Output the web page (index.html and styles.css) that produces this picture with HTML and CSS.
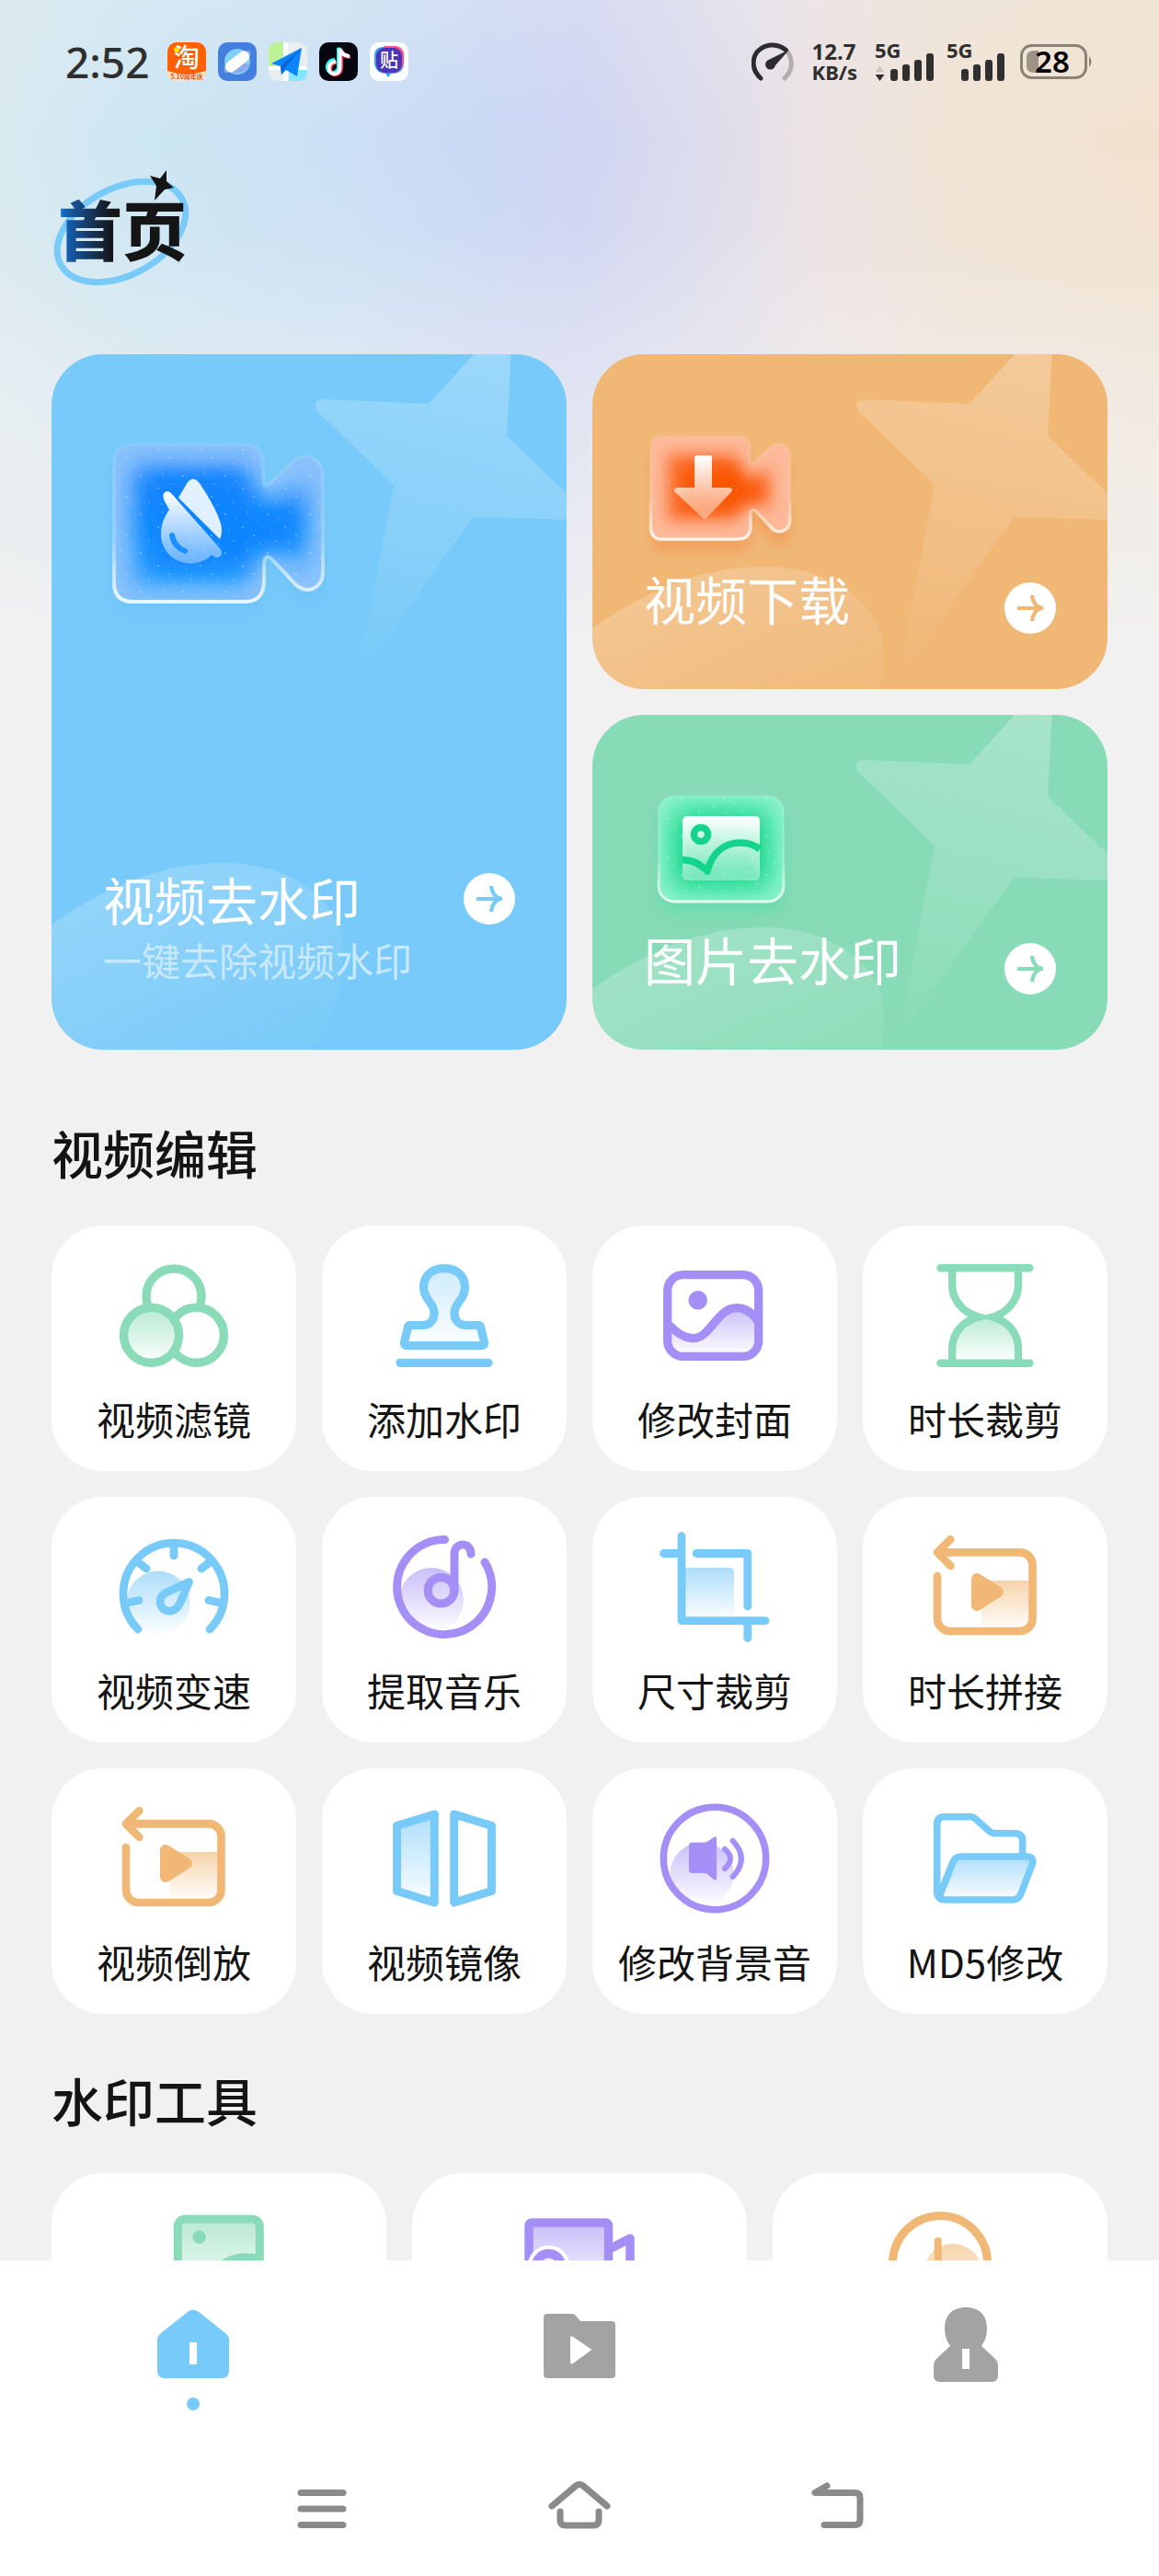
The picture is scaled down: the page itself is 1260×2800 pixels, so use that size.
FILE: index.html
```html
<!DOCTYPE html>
<html lang="zh-CN">
<head>
<meta charset="utf-8">
<meta name="viewport" content="width=device-width, initial-scale=1">
<title>首页</title>
<link rel="stylesheet" href="styles.css">
</head>
<body>
<svg class="defs" aria-hidden="true">
  <defs>
    <linearGradient id="fade-green" x1="0" y1="0" x2="0" y2="1"><stop offset="0" stop-color="#b9ead2"/><stop offset="1" stop-color="#fbfefd"/></linearGradient>
    <linearGradient id="fade-blue" x1="0" y1="0" x2="0" y2="1"><stop offset="0" stop-color="#aedefb"/><stop offset="1" stop-color="#fbfdff"/></linearGradient>
    <linearGradient id="fade-purple" x1="0" y1="0" x2="0" y2="1"><stop offset="0" stop-color="#c9bff9"/><stop offset="1" stop-color="#fefdff"/></linearGradient>
    <linearGradient id="fade-orange" x1="0" y1="0" x2="0" y2="1"><stop offset="0" stop-color="#f6d4ab"/><stop offset="1" stop-color="#fffcf9"/></linearGradient>
    <linearGradient id="star-fade" x1=".6" y1="0" x2=".4" y2="1"><stop offset="0" stop-color="#fff" stop-opacity=".27"/><stop offset="1" stop-color="#fff" stop-opacity=".03"/></linearGradient>
    <linearGradient id="hill-fade" x1="0" y1="0" x2=".7" y2="1"><stop offset="0" stop-color="#fff" stop-opacity=".24"/><stop offset="1" stop-color="#fff" stop-opacity=".03"/></linearGradient>
    <linearGradient id="rim" x1="0" y1="0" x2="0" y2="1"><stop offset="0" stop-color="#fff" stop-opacity=".08"/><stop offset=".6" stop-color="#fff" stop-opacity=".2"/><stop offset="1" stop-color="#fff" stop-opacity=".85"/></linearGradient>
    <linearGradient id="glyph-white" x1="0" y1="0" x2="0" y2="1"><stop offset="0" stop-color="#fff"/><stop offset="1" stop-color="#fff" stop-opacity=".35"/></linearGradient>
    <linearGradient id="deep-blue" x1="0" y1="0" x2="0" y2="1"><stop offset="0" stop-color="#1f7fff"/><stop offset=".5" stop-color="#0a88ff"/><stop offset="1" stop-color="#2ea4ff"/></linearGradient>
    <filter id="soft" x="-20%" y="-20%" width="140%" height="140%"><feGaussianBlur stdDeviation="13"/></filter>
    <filter id="shade" x="-30%" y="-30%" width="160%" height="180%"><feGaussianBlur stdDeviation="9"/></filter>
    <pattern id="specks" width="46" height="42" patternUnits="userSpaceOnUse">
      <g fill="#fff" opacity=".4"><circle cx="5" cy="6" r=".9"/><circle cx="17" cy="12" r=".7"/><circle cx="29" cy="4" r=".8"/><circle cx="40" cy="15" r=".7"/><circle cx="9" cy="23" r=".7"/><circle cx="24" cy="20" r=".9"/><circle cx="36" cy="29" r=".9"/><circle cx="14" cy="35" r=".8"/><circle cx="28" cy="37" r=".7"/><circle cx="43" cy="38" r=".7"/></g>
    </pattern>
    <path id="camera" d="M88 98H210Q230 98 230 118V140Q232 146 237 141L262 117C274 104 295 113 295 131V237C295 256 275 262 264 249L239 222Q231 216 231 228V248Q230 269 210 269H88Q68 269 68 248V118Q68 98 88 98Z"/>
    <clipPath id="camera-clip"><use href="#camera"/></clipPath>
    <clipPath id="tile-clip"><rect x="72" y="88" width="136" height="115" rx="17"/></clipPath>
    <path id="star" d="M296 49L410 54L468 -10H500L495 89L566 157V180L458 177L353 325Q347 333 340 330Q338 327 339 318L372 142L289 62Q282 50 296 49Z" fill="url(#star-fade)"/>
    <path id="hill" d="M0 67C60 25 120 0 187 0C265 0 317 45 317 94C317 140 305 175 282 205H0Z" fill="url(#hill-fade)"/>
    <symbol id="arrow" viewBox="0 0 56 56"><circle cx="28" cy="28" r="28" fill="#fff"/><path d="M14 28H42M30 14C31 23 36 28 42 28C36 28 31 33 30 42" fill="none" stroke="currentColor" stroke-width="4.200"/></symbol>
    <symbol id="loop-video" viewBox="0 0 140 140">
      <rect x="66" y="63" width="52" height="51" fill="url(#fade-orange)"/>
      <path d="M20 32.4H108A13.5 13.5 0 0 1 121.5 46V104.5A13.5 13.5 0 0 1 108 118H31.5A13.5 13.5 0 0 1 18 104.5V58M32.3 18.2L18 32.4L32.3 46.9" fill="none" stroke="#f0b775" stroke-width="8.6" stroke-linecap="round" stroke-linejoin="round"/>
      <path d="M61 61L84 75.3L61 90Z" fill="#f0b775" stroke="#f0b775" stroke-width="12" stroke-linejoin="round"/>
    </symbol>
    <symbol id="signal" viewBox="0 0 48 30"><g fill="#2f2f2f"><rect x="0" y="17" width="8" height="13" rx="3"/><rect x="13" y="12" width="8" height="18" rx="3"/><rect x="26" y="7" width="8" height="23" rx="3"/><rect x="39" y="0" width="8" height="30" rx="3"/></g></symbol>
  </defs>
</svg>

<div class="app">
  <header class="status">
    <div class="status-side">
      <time class="clock">2:52</time>
      <div class="notices">
        <svg class="notice" viewBox="0 0 42 42" aria-hidden="true">
          <rect width="42" height="42" rx="10" fill="#ff6000"/>
          <path d="M0 31Q20 38 42 31V32Q42 42 32 42H10Q0 42 0 32Z" fill="#ffe3c4"/>
          <circle cx="10" cy="8" r="3" fill="#ffe000"/>
          <text x="21" y="27" text-anchor="middle" font-size="28" font-weight="500" fill="#fff">淘</text>
          <text x="21" y="40" text-anchor="middle" font-size="7" font-weight="700" fill="#e0521c">5.10周年庆</text>
        </svg>
        <svg class="notice" viewBox="0 0 42 42" aria-hidden="true">
          <rect width="42" height="42" rx="10" fill="#427fde"/>
          <circle cx="21" cy="21" r="14" fill="#7fd0f5"/>
          <path d="M9 27A14 14 0 0 0 34 24L24 22Z" fill="#8fa8ee"/>
          <ellipse cx="21" cy="21" rx="18" ry="6.500" transform="rotate(-38 21 21)" fill="#a9cdf8" opacity=".55"/>
          <rect x="6" y="15" width="30" height="12" rx="6" transform="rotate(-38 21 21)" fill="#fff"/>
        </svg>
        <svg class="notice" viewBox="0 0 42 42" aria-hidden="true">
          <rect width="42" height="42" rx="10" fill="#e9eff0"/>
          <path d="M10 0H17V26H0V10Q0 0 10 0Z" fill="#bdf297"/>
          <path d="M22 30H42V32Q42 42 32 42H22Z" fill="#86e4fd"/>
          <path d="M16 0H21V42H16ZM0 26H42V30H0Z" fill="#fff"/>
          <path d="M36 6L3 23L13 26L14 35L19 30L31 37Z" fill="#0b84ff"/><path d="M36 6L13 26L14 35L18 28Z" fill="#0866d8"/>
        </svg>
        <svg class="notice" viewBox="0 0 42 42" aria-hidden="true">
          <rect width="42" height="42" rx="10" fill="#05060f"/>
          <g fill="none" stroke-width="4"><path d="M17 19C6 19 7 34 15 33Q21 32 21 26V6Q24 14 31 14" stroke="#25f4ee"/><path d="M19 22C10 22 10 36 18 35Q24 34 24 28V8Q26 16 34 16" stroke="#fe2c55"/><path d="M18 21C8 21 9 35 16.500 34.500Q22.500 33.500 22.500 27.500V7Q25 15 33 15" stroke="#fff"/></g>
        </svg>
        <svg class="notice" viewBox="0 0 42 42" aria-hidden="true">
          <rect width="42" height="42" rx="10" fill="#fff"/>
          <path d="M14 5H28Q37 5 37 15V23Q37 33 26 34H23L20 38L17 34Q5 33 5 21V15Q5 5 14 5Z" fill="#2ea4f7"/>
          <path d="M15 4H28Q37 5 37 15V23Q35 31 27 33Z" fill="#ff4f86"/>
          <rect x="7" y="6" width="28" height="27" rx="9" fill="#4b34b5"/>
          <text x="21" y="27" text-anchor="middle" font-size="20" font-weight="500" fill="#fff">贴</text>
        </svg>
      </div>
    </div>
    <div class="status-side status-right">
      <svg class="meter" viewBox="0 0 46 42" aria-hidden="true">
        <path d="M37 8C46 17 45 31 36 39" fill="none" stroke="#b3adac" stroke-width="5" stroke-linecap="round"/>
        <path d="M10 39C-1 29 0 14 10 7C18 1 29 2 37 8" fill="none" stroke="#2c2c2e" stroke-width="5" stroke-linecap="round"/>
        <path d="M41 8L26 25A5.500 5.500 0 1 1 18.500 19Z" fill="#2c2c2e"/>
      </svg>
      <div class="rate"><span class="rate-num">12.7</span><span>KB/s</span></div>
      <div class="cell">
        <span>5G</span>
        <div class="cell-bars">
          <svg class="traffic" viewBox="0 0 11 18" aria-hidden="true"><path d="M0 7L5.500 0L11 7Z" fill="#cac3bd"/><path d="M0 10H11L5.500 18Z" fill="#2f2f2f"/></svg>
          <svg class="bars" aria-hidden="true"><use href="#signal"/></svg>
        </div>
      </div>
      <div class="cell">
        <span>5G</span>
        <div class="cell-bars"><svg class="bars" aria-hidden="true"><use href="#signal"/></svg></div>
      </div>
      <svg class="battery" viewBox="0 0 80 38" role="img" aria-label="28">
        <rect x="1.500" y="1.500" width="70" height="35" rx="11" fill="none" stroke="#8a8177" stroke-width="3"/>
        <path d="M20 7V31H15Q7 31 7 24V14Q7 7 15 7Z" fill="#9d9286"/>
        <path d="M75 13Q80 19 75 25Z" fill="#8a8177"/>
        <text x="35" y="31" text-anchor="middle" font-size="33" font-weight="600" fill="#000">28</text>
      </svg>
    </div>
  </header>

  <main class="content">
    <h1 class="logo">
      <svg class="logo-art" viewBox="0 0 156 134" role="img" aria-label="首页">
        <defs><linearGradient id="ink" gradientUnits="userSpaceOnUse" x1="8" y1="0" x2="72" y2="0"><stop offset="0" stop-color="#1279da"/><stop offset=".25" stop-color="#155298"/><stop offset=".9" stop-color="#151515"/></linearGradient></defs>
        <ellipse cx="76" cy="72" rx="75" ry="47" transform="rotate(-28.500 76 72)" fill="none" stroke="#78caf9" stroke-width="7"/>
        <text x="7" y="98" font-size="70" font-weight="900" fill="url(#ink)">首页</text>
        <path d="M107 11L118 14L125 5V17L133 24L123 26L112 38L114 22Z" fill="#151515"/>
      </svg>
    </h1>

    <section class="hero">
      <a class="feature feature-tall feature-blue" href="#">
        <svg class="feature-art" viewBox="0 0 560 756" aria-hidden="true">
          <use href="#star"/><use href="#hill" y="553"/>
          <use href="#camera" y="14" fill="#4aa0f0" opacity=".15" filter="url(#shade)"/>
          <g clip-path="url(#camera-clip)">
            <use href="#camera" fill="#8ac2fc"/>
            <path d="M90 122H214V162L242 162L276 142V232L242 208L214 212V252H90Z" fill="url(#deep-blue)" filter="url(#soft)"/>
            <path d="M110 140H220V175H262V208H220V232H110Z" fill="#0a85ff" filter="url(#soft)"/>
            <use href="#camera" fill="url(#specks)"/>
          </g>
          <use href="#camera" fill="none" stroke="url(#rim)" stroke-width="4"/>
          <path d="M148 139Q154 132 160 139C172 156 185 180 185 191Q185 197 183 201L138 156Z" fill="#fff" opacity=".88"/>
          <path d="M130 151L183 211Q187 216 183 220Q179 223 174 218C163 230 141 231 128 218C115 203 117 185 128 169L123 160Q119 151 125 149Q128 149 130 151Z" fill="url(#glyph-white)"/>
          <path d="M131 197Q133 209 145 214" fill="none" stroke="#1b90ff" stroke-width="6" stroke-linecap="round"/>
        </svg>
        <span class="feature-row"><span class="feature-title">视频去水印</span><svg class="go" aria-hidden="true"><use href="#arrow"/></svg></span>
        <span class="feature-sub">一键去除视频水印</span>
      </a>
      <a class="feature feature-orange" href="#">
        <svg class="feature-art" viewBox="0 0 560 364" aria-hidden="true">
          <use href="#star"/><use href="#hill" y="231"/>
          <g transform="translate(18 25) scale(.667 .655)">
            <use href="#camera" y="22" fill="#f5803c" opacity=".35" filter="url(#shade)"/>
            <g clip-path="url(#camera-clip)">
              <use href="#camera" fill="#fdb99a"/>
              <path d="M96 128H212V164L240 164L262 150V222L240 206L212 210V238H96Z" fill="#fb6a25" filter="url(#soft)"/>
              <path d="M124 150H216V178H246V204H216V218H124Z" fill="#f95403" filter="url(#soft)"/>
              <use href="#camera" fill="url(#specks)"/>
            </g>
            <use href="#camera" fill="none" stroke="url(#rim)" stroke-width="5"/>
          </g>
          <path d="M114 110H127Q130 110 130 113V145H149Q154 146 151 150L124 178Q122 180 120 178L90 150Q87 146 92 145H111V113Q111 110 114 110Z" fill="url(#glyph-white)"/>
        </svg>
        <span class="feature-row"><span class="feature-title">视频下载</span><svg class="go" aria-hidden="true"><use href="#arrow"/></svg></span>
      </a>
      <a class="feature feature-green" href="#">
        <svg class="feature-art" viewBox="0 0 560 364" aria-hidden="true">
          <use href="#star"/><use href="#hill" y="231"/>
          <rect x="72" y="100" width="136" height="115" rx="17" fill="#2bdc98" opacity=".35" filter="url(#shade)"/>
          <g clip-path="url(#tile-clip)">
            <rect x="70" y="86" width="140" height="119" fill="#8cf3ca"/>
            <rect x="88" y="104" width="104" height="84" rx="8" fill="#10d68a" filter="url(#soft)"/>
            <rect x="70" y="86" width="140" height="119" fill="url(#specks)"/>
          </g>
          <rect x="72" y="88" width="136" height="115" rx="17" fill="none" stroke="url(#rim)" stroke-width="3"/>
          <rect x="98" y="110" width="84" height="70" rx="5" fill="url(#glyph-white)"/>
          <circle cx="118" cy="130" r="7.500" fill="none" stroke="#14d38a" stroke-width="7.500"/>
          <path d="M98 158C108 157 117 162 125 170C130 150 143 139 161 139Q173 139 182 146" fill="none" stroke="#14d38a" stroke-width="7.500" stroke-linejoin="round"/>
        </svg>
        <span class="feature-row"><span class="feature-title">图片去水印</span><svg class="go" aria-hidden="true"><use href="#arrow"/></svg></span>
      </a>
    </section>

    <section class="group">
      <h2 class="group-title">视频编辑</h2>
      <div class="tools tools-four">
        <button class="tool" type="button">
          <svg class="tool-icon" viewBox="0 0 140 140" aria-hidden="true"><g stroke="#8adbb8" stroke-width="9.400" fill="#fff"><circle cx="70" cy="49" r="30"/><circle cx="94.500" cy="91.300" r="30"/><circle cx="45.500" cy="91.300" r="30" fill="url(#fade-green)"/></g></svg>
          <span>视频滤镜</span>
        </button>
        <button class="tool" type="button">
          <svg class="tool-icon" viewBox="0 0 140 140" aria-hidden="true"><g stroke="#78caf9" stroke-width="9.200" stroke-linecap="round" fill="none"><path fill="url(#fade-blue)" fill-opacity=".6" d="M70 18.600C56 18.600 47.500 27.500 47.500 39C47.500 46 50 50 54 55C57.500 59.500 59 63 59 67.500C59 76 53 80.500 46 80.500H33Q31 80.500 30.500 82.500L26.500 99Q26 102.700 30 102.700H110Q114 102.700 113.500 99L109.500 82.500Q109 80.500 107 80.500H94C87 80.500 81 76 81 67.500C81 63 82.500 59.500 86 55C90 50 92.500 46 92.500 39C92.500 27.500 84 18.600 70 18.600Z"/><path d="M22 121.300H118"/></g></svg>
          <span>添加水印</span>
        </button>
        <button class="tool" type="button">
          <svg class="tool-icon" viewBox="0 0 140 140" aria-hidden="true"><path d="M20 80C30 90 38 94.700 46 94.700C66 94.700 72 61.700 94 61.700C104 61.700 111 67 117 76V112H20Z" fill="url(#fade-purple)"/><g fill="none" stroke="#a48ff6" stroke-width="9.300"><path d="M20 80C30 90 38 94.700 46 94.700C66 94.700 72 61.700 94 61.700C104 61.700 111 67 117 76"/><rect x="18.700" y="25.700" width="99" height="88.700" rx="17"/></g><circle cx="51.700" cy="53.300" r="10.300" fill="#a48ff6"/></svg>
          <span>修改封面</span>
        </button>
        <button class="tool" type="button">
          <svg class="tool-icon" viewBox="0 0 140 140" aria-hidden="true"><path d="M62 70H79C94 77 106 88 106 106V118H34V106C34 88 46 77 62 70Z" fill="url(#fade-green)"/><g fill="none" stroke="#8adbb8" stroke-width="8.400" stroke-linecap="round"><path d="M21.500 18.200H118.500M21.500 121.700H118.500M34.200 20V37C34.200 53 46 67 63 71.500C46 76 34.200 88 34.200 106V121M106 20V37C106 53 94 67 78 71.500C94 76 106 88 106 106V121"/></g></svg>
          <span>时长裁剪</span>
        </button>
        <button class="tool" type="button">
          <svg class="tool-icon" viewBox="0 0 140 140" aria-hidden="true"><circle cx="53" cy="87" r="34.500" fill="url(#fade-blue)"/><g fill="none" stroke="#78caf9" stroke-width="8.800" stroke-linecap="round" stroke-linejoin="round"><path d="M31 116A55 55 0 1 1 109 116M70 24V36M31 43L40 50M109 43L100 50M20 87L32 84.500M120 87L108 84.500M86.500 64.500L62.500 75.500C56.500 78.500 54 84 55.500 89C57.500 95 63.500 97.500 69 95.500C73 94 75 91 77 87Z"/></g></svg>
          <span>视频变速</span>
        </button>
        <button class="tool" type="button">
          <svg class="tool-icon" viewBox="0 0 140 140" aria-hidden="true"><circle cx="56" cy="84" r="35" fill="url(#fade-purple)"/><g fill="none" stroke="#a48ff6" stroke-width="9" stroke-linecap="round"><path d="M114 43A51.500 51.500 0 1 1 70.500 18.500"/><circle cx="66.500" cy="73.700" r="14.300"/><path d="M81 74V34C81 20.500 99 20.500 99 34"/></g></svg>
          <span>提取音乐</span>
        </button>
        <button class="tool" type="button">
          <svg class="tool-icon" viewBox="0 0 140 140" aria-hidden="true"><path d="M36 49H86Q91 49 91 54V104H36Z" fill="url(#fade-blue)"/><path d="M34 14.700V106.600H125M14.500 33.500H32M50 33.500H105.800V91M105.800 108V125.500" fill="none" stroke="#78caf9" stroke-width="8.800" stroke-linecap="round" stroke-linejoin="round"/></svg>
          <span>尺寸裁剪</span>
        </button>
        <button class="tool" type="button">
          <svg class="tool-icon" aria-hidden="true"><use href="#loop-video"/></svg>
          <span>时长拼接</span>
        </button>
        <button class="tool" type="button">
          <svg class="tool-icon" aria-hidden="true"><use href="#loop-video"/></svg>
          <span>视频倒放</span>
        </button>
        <button class="tool" type="button">
          <svg class="tool-icon" viewBox="0 0 140 140" aria-hidden="true"><g stroke="#78caf9" stroke-width="9" stroke-linejoin="round"><path d="M59.300 22L18.600 34.500V105.500L59.300 118Z" fill="url(#fade-blue)"/><path d="M80.700 22L121.400 34.500V105.500L80.700 118Z" fill="none"/></g></svg>
          <span>视频镜像</span>
        </button>
        <button class="tool" type="button">
          <svg class="tool-icon" viewBox="0 0 140 140" aria-hidden="true"><circle cx="56" cy="87" r="34.500" fill="url(#fade-purple)"/><circle cx="70" cy="70" r="55.700" fill="none" stroke="#a48ff6" stroke-width="7.600"/><path d="M45 52.700H58Q61 52.700 63 51L69 47Q72 45.500 72 49V91Q72 95 69 93L62 87Q60 86 57 86H45Q42 86 42 83V56Q42 52.700 45 52.700Z" fill="#a48ff6"/><path d="M81 60Q93 70 81 81M89.700 51Q108 70 89.700 90" fill="none" stroke="#a48ff6" stroke-width="6" stroke-linecap="round"/></svg>
          <span>修改背景音</span>
        </button>
        <button class="tool" type="button">
          <svg class="tool-icon" viewBox="0 0 140 140" aria-hidden="true"><g stroke="#78caf9" stroke-width="7.600" stroke-linejoin="round"><path d="M24 115Q17.700 113 17.700 106V33Q17.700 24.800 26 24.800H54Q57 24.800 59 26.500L74 40Q77 42.700 80 42.700H102Q110.600 42.700 110.600 51V66" fill="none"/><path d="M44 68H115Q124 68 121 77L109 108Q106.500 115 100 115H27Q19 115 21.500 108L35 74Q37.500 68 44 68Z" fill="url(#fade-blue)"/></g></svg>
          <span>MD5修改</span>
        </button>
      </div>
    </section>

    <section class="group group-next">
      <h2 class="group-title">水印工具</h2>
      <div class="tools tools-three">
        <button class="tool" type="button" aria-label="图片加水印">
          <svg class="tool-icon" viewBox="0 0 140 140" aria-hidden="true"><g stroke="#8adbb8" stroke-width="9"><rect x="25.300" y="22" width="89" height="92" rx="8" fill="url(#fade-green)"/><path d="M60 95C66 72 82 63.500 99 63.500Q108 63.500 116 66" fill="none"/></g><circle cx="48.600" cy="41.600" r="7.300" fill="#8adbb8"/></svg>
        </button>
        <button class="tool" type="button" aria-label="视频加水印">
          <svg class="tool-icon" viewBox="0 0 140 140" aria-hidden="true"><g stroke="#a48ff6" stroke-width="9.500" stroke-linejoin="round"><rect x="15" y="26" width="86.500" height="88" rx="3" fill="url(#fade-purple)"/><path d="M104 54L125 43V97L104 86" fill="none"/><circle cx="36.500" cy="73.600" r="23" fill="#fff" stroke="none"/><circle cx="36.500" cy="73.600" r="14" fill="#efebfd"/></g></svg>
        </button>
        <button class="tool" type="button" aria-label="时间水印">
          <svg class="tool-icon" viewBox="0 0 140 140" aria-hidden="true"><circle cx="84" cy="81" r="32" fill="url(#fade-orange)"/><g fill="none" stroke="#f0b775" stroke-width="9" stroke-linecap="round"><circle cx="70" cy="70" r="51.500"/><path d="M67.700 46V78H90" stroke-width="8"/></g></svg>
        </button>
      </div>
    </section>
  </main>

  <footer class="bottom">
    <nav class="tabs">
      <a class="tab tab-on" href="#" aria-label="首页" aria-current="page">
        <svg class="tab-icon" viewBox="0 0 84 84" aria-hidden="true"><path d="M36 6Q42 1 48 6L77 29Q81 32 81 36V70Q81 78 73 78H11Q3 78 3 70V36Q3 32 7 29Z" fill="currentColor"/><path d="M38 39H46V63H38Z" fill="#fff"/></svg>
      </a>
      <a class="tab" href="#" aria-label="作品">
        <svg class="tab-icon" viewBox="0 0 84 84" aria-hidden="true"><path d="M7 8H34Q36 8 38 10L43 16H77Q81 16 81 20V74Q81 78 77 78H7Q3 78 3 74V12Q3 8 7 8Z" fill="currentColor"/><path d="M32 34Q32 31 35 33L54 46Q56 47 54 48L35 62Q32 63 32 60Z" fill="#fff"/></svg>
      </a>
      <a class="tab" href="#" aria-label="我的">
        <svg class="tab-icon" viewBox="0 0 84 84" aria-hidden="true"><path d="M42 1C57 1 65 10 65 24Q65 35 59 43L74 57Q77 60 77 64V75Q77 82 70 82H14Q7 82 7 75V64Q7 60 10 57L25 43Q19 35 19 24C19 10 27 1 42 1Z" fill="currentColor"/><path d="M38 46H46V68H38Z" fill="#fff"/></svg>
      </a>
    </nav>
    <div class="system">
      <button class="key" type="button" aria-label="最近任务"><svg class="key-icon" viewBox="0 0 70 60" aria-hidden="true"><path d="M12 12.500H58M12 30H58M12 47.500H58"/></svg></button>
      <button class="key" type="button" aria-label="主屏幕"><svg class="key-icon" viewBox="0 0 70 60" aria-hidden="true"><path d="M5 27L31 5Q35 2 39 5L65 27M14 33V42Q14 48 20 48H50Q56 48 56 42V33"/></svg></button>
      <button class="key" type="button" aria-label="返回"><svg class="key-icon" viewBox="0 0 70 60" aria-hidden="true"><path d="M24 5L11 12.500H54Q60 12.500 60 18V42Q60 47.500 54 47.500H21"/></svg></button>
    </div>
  </footer>
</div>
</body>
</html>
```
FILE: styles.css
```css
* {
  box-sizing: border-box;
}

body {
  margin: 0;
  background: #f1f1f1;
  color: #141414;
  font-family: "Noto Sans CJK SC", "Noto Sans", sans-serif;
}

h1,
h2 {
  margin: 0;
}

a {
  color: inherit;
  text-decoration: none;
}

button {
  margin: 0;
  padding: 0;
  border: 0;
  background: none;
  color: inherit;
  font: inherit;
}

svg {
  display: block;
}

.defs {
  position: absolute;
  width: 0;
  height: 0;
}

.app {
  display: flex;
  flex-direction: column;
  height: 100vh;
  background:
    linear-gradient(to bottom, rgba(241, 241, 241, .25) 0, rgba(241, 241, 241, .05) 150px, rgba(241, 241, 241, .12) 250px, rgba(241, 241, 241, .45) 380px, #f1f1f1 700px),
    linear-gradient(to right, #d8e9f0 0, #cbe6f3 12%, #c9dff5 30%, #c9d7f4 42%, #cdd4f3 50%, #d9daee 59%, #ebe2e3 70%, #f0e2d3 82%, #f1e1cc 100%);
}

/* Status bar */
.status {
  display: flex;
  align-items: center;
  justify-content: space-between;
  flex: none;
  height: 134px;
  padding: 0 71px;
  font-family: "Noto Sans", sans-serif;
  color: #2f2f2f;
}

.status-side {
  display: flex;
  align-items: center;
  gap: 20px;
}

.clock {
  font-size: 46px;
  line-height: 56px;
  font-weight: 500;
}

.notices {
  display: flex;
  gap: 13px;
}

.notice {
  width: 42px;
  height: 42px;
  overflow: visible;
  font-family: "Noto Sans CJK SC", sans-serif;
}

.meter {
  width: 46px;
  height: 42px;
}

.rate {
  display: flex;
  flex-direction: column;
  margin: 0 3px 0 4px;
  font-size: 22px;
  line-height: 23px;
  font-weight: 700;
}

.rate-num {
  font-size: 24px;
}

.cell {
  display: flex;
  flex-direction: column;
  height: 42px;
  font-size: 22px;
  line-height: 16px;
  font-weight: 700;
}

.cell + .cell {
  margin-left: -3px;
}

.cell-bars {
  display: flex;
  align-items: flex-end;
  justify-content: flex-end;
  gap: 6px;
  margin-top: -4px;
  padding-left: 16px;
}

.cell-bars:has(.traffic) {
  padding-left: 0;
}

.traffic {
  width: 11px;
  height: 16px;
}

.bars {
  width: 48px;
  height: 30px;
}

.status-right {
  gap: 16px;
}

.battery {
  width: 80px;
  height: 38px;
  overflow: visible;
}

/* Scrolling page */
.content {
  flex: 1;
  min-height: 0;
  overflow-y: auto;
  scrollbar-width: none;
  padding: 46px 56px 0;
}

.logo-art {
  width: 156px;
  height: 134px;
}

.hero {
  display: grid;
  grid-template-columns: 1fr 1fr;
  grid-auto-rows: 364px;
  gap: 28px;
  margin-top: 71px;
}

.feature {
  position: relative;
  display: flex;
  flex-direction: column;
  justify-content: flex-end;
  padding: 0 56px 60px;
  border-radius: 56px;
  overflow: hidden;
}

.feature-tall {
  grid-row: span 2;
  padding-bottom: 68px;
}

.feature-blue {
  background: #77caf9;
  color: #77caf9;
}

.feature-orange {
  background: #f0b775;
  color: #f0b775;
}

.feature-green {
  background: #88dbb7;
  color: #88dbb7;
}

.feature-art {
  position: absolute;
  inset: 0;
  width: 100%;
  height: 100%;
}

.feature-row {
  position: relative;
  display: flex;
  align-items: flex-end;
  justify-content: space-between;
}

.feature-title {
  color: #fff;
  font-size: 56px;
  line-height: 78px;
}

.feature-tall .feature-row {
  align-items: center;
}

.feature-tall .feature-title {
  line-height: 72px;
}

.feature-sub {
  position: relative;
  color: #c8e9fd;
  font-size: 42px;
  line-height: 60px;
}

.go {
  flex: none;
  width: 56px;
  height: 56px;
}

.group {
  margin-top: 71px;
}

.group-next {
  margin-top: 53px;
}

.group-title {
  font-size: 56px;
  line-height: 80px;
  font-weight: 500;
}

.tools {
  display: grid;
  gap: 28px;
  margin-top: 40px;
}

.tools-four {
  grid-template-columns: repeat(4, 1fr);
}

.tools-three {
  grid-template-columns: repeat(3, 1fr);
}

.tool {
  display: flex;
  flex-direction: column;
  align-items: center;
  gap: 12px;
  height: 267px;
  padding-top: 28px;
  border-radius: 56px;
  background: #fff;
  font-size: 42px;
  line-height: 60px;
  white-space: nowrap;
}

.tool-icon {
  flex: none;
  width: 140px;
  height: 140px;
}

/* Tab bar and system keys */
.bottom {
  flex: none;
  background: #fff;
}

.tabs {
  display: grid;
  grid-template-columns: repeat(3, 1fr);
  height: 240px;
}

.tab {
  display: flex;
  flex-direction: column;
  align-items: center;
  gap: 15px;
  padding-top: 50px;
  color: #a3a3a3;
}

.tab-icon {
  width: 84px;
  height: 84px;
}

.tab-on {
  color: #77caf9;
}

.tab-on::after {
  content: "";
  width: 14px;
  height: 14px;
  border-radius: 50%;
  background: currentColor;
}

.system {
  display: flex;
  justify-content: center;
  gap: 210px;
  height: 103px;
}

.key-icon {
  width: 70px;
  height: 60px;
  fill: none;
  stroke: #8a8a8a;
  stroke-width: 7;
  stroke-linecap: round;
  stroke-linejoin: round;
}

.key {
  height: 60px;
}
```
